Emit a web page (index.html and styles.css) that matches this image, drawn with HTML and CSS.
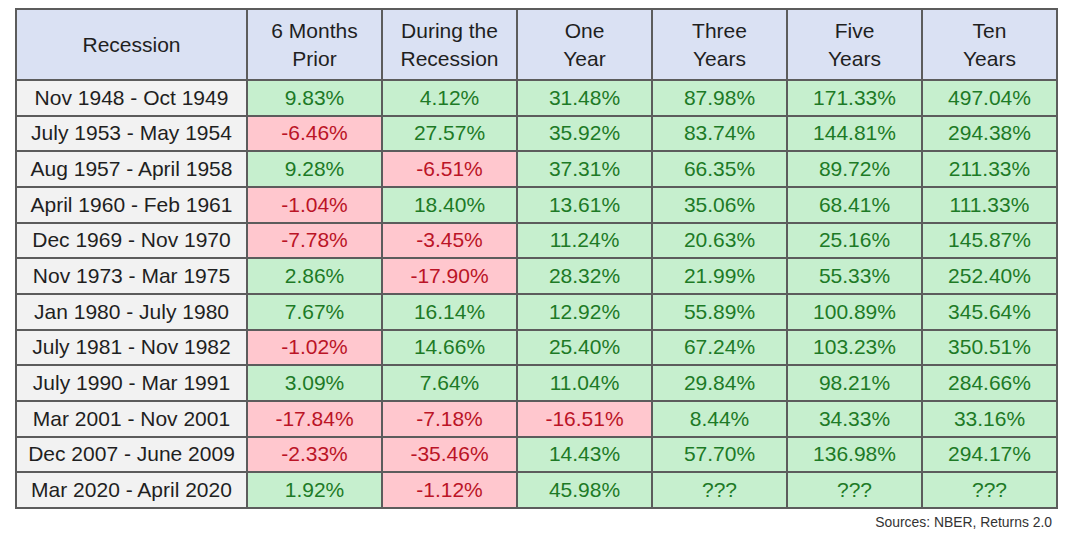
FILE: index.html
```html
<!DOCTYPE html>
<html>
<head>
<meta charset="utf-8">
<link rel="stylesheet" href="styles.css">
</head>
<body>
<div class="wrap">
<table class="rt">
<colgroup><col class="c-rec"><col class="c-num"><col class="c-num"><col class="c-num"><col class="c-num"><col class="c-num"><col class="c-num"></colgroup>
<thead>
<tr><th>Recession</th><th>6 Months<br>Prior</th><th>During the<br>Recession</th><th>One<br>Year</th><th>Three<br>Years</th><th>Five<br>Years</th><th>Ten<br>Years</th></tr>
</thead>
<tbody>
<tr><td class="rec">Nov 1948 - Oct 1949</td><td class="g">9.83%</td><td class="g">4.12%</td><td class="g">31.48%</td><td class="g">87.98%</td><td class="g">171.33%</td><td class="g">497.04%</td></tr>
<tr><td class="rec">July 1953 - May 1954</td><td class="r">-6.46%</td><td class="g">27.57%</td><td class="g">35.92%</td><td class="g">83.74%</td><td class="g">144.81%</td><td class="g">294.38%</td></tr>
<tr><td class="rec">Aug 1957 - April 1958</td><td class="g">9.28%</td><td class="r">-6.51%</td><td class="g">37.31%</td><td class="g">66.35%</td><td class="g">89.72%</td><td class="g">211.33%</td></tr>
<tr><td class="rec">April 1960 - Feb 1961</td><td class="r">-1.04%</td><td class="g">18.40%</td><td class="g">13.61%</td><td class="g">35.06%</td><td class="g">68.41%</td><td class="g">111.33%</td></tr>
<tr><td class="rec">Dec 1969 - Nov 1970</td><td class="r">-7.78%</td><td class="r">-3.45%</td><td class="g">11.24%</td><td class="g">20.63%</td><td class="g">25.16%</td><td class="g">145.87%</td></tr>
<tr><td class="rec">Nov 1973 - Mar 1975</td><td class="g">2.86%</td><td class="r">-17.90%</td><td class="g">28.32%</td><td class="g">21.99%</td><td class="g">55.33%</td><td class="g">252.40%</td></tr>
<tr><td class="rec">Jan 1980 - July 1980</td><td class="g">7.67%</td><td class="g">16.14%</td><td class="g">12.92%</td><td class="g">55.89%</td><td class="g">100.89%</td><td class="g">345.64%</td></tr>
<tr><td class="rec">July 1981 - Nov 1982</td><td class="r">-1.02%</td><td class="g">14.66%</td><td class="g">25.40%</td><td class="g">67.24%</td><td class="g">103.23%</td><td class="g">350.51%</td></tr>
<tr><td class="rec">July 1990 - Mar 1991</td><td class="g">3.09%</td><td class="g">7.64%</td><td class="g">11.04%</td><td class="g">29.84%</td><td class="g">98.21%</td><td class="g">284.66%</td></tr>
<tr><td class="rec">Mar 2001 - Nov 2001</td><td class="r">-17.84%</td><td class="r">-7.18%</td><td class="r">-16.51%</td><td class="g">8.44%</td><td class="g">34.33%</td><td class="g">33.16%</td></tr>
<tr><td class="rec">Dec 2007 - June 2009</td><td class="r">-2.33%</td><td class="r">-35.46%</td><td class="g">14.43%</td><td class="g">57.70%</td><td class="g">136.98%</td><td class="g">294.17%</td></tr>
<tr><td class="rec">Mar 2020 - April 2020</td><td class="g">1.92%</td><td class="r">-1.12%</td><td class="g">45.98%</td><td class="g">???</td><td class="g">???</td><td class="g">???</td></tr>
</tbody>
</table>
<div class="src">Sources: NBER, Returns 2.0</div>
</div>
</body>
</html>
```
FILE: styles.css
```css
html, body {
  margin: 0;
  padding: 0;
  background: #ffffff;
}
.wrap {
  padding: 8px 0 0 15px;
  width: 1040px;
  font-family: "Liberation Sans", Arial, sans-serif;
}
.rt {
  border-collapse: collapse;
  table-layout: fixed;
  width: 1040px;
  font-size: 21px;
  color: #1f1f1f;
}
.c-rec { width: 231px; }
.c-num { width: 135px; }
.rt th, .rt td {
  border: 2px solid #5c5c5c;
  text-align: center;
  padding: 0;
  white-space: nowrap;
}
.rt th {
  background: #dae1f3;
  font-weight: normal;
  height: 69px;
  line-height: 28px;
}
.rt td {
  height: 33.67px;
  line-height: 24px;
}
.rec { background: #f2f2f2; }
.g { background: #c6efce; color: #1d7a26; }
.r { background: #ffc7ce; color: #bb1426; }
.src {
  text-align: right;
  font-size: 13.9px;
  color: #333333;
  padding: 5px 3px 0 0;
}
```
